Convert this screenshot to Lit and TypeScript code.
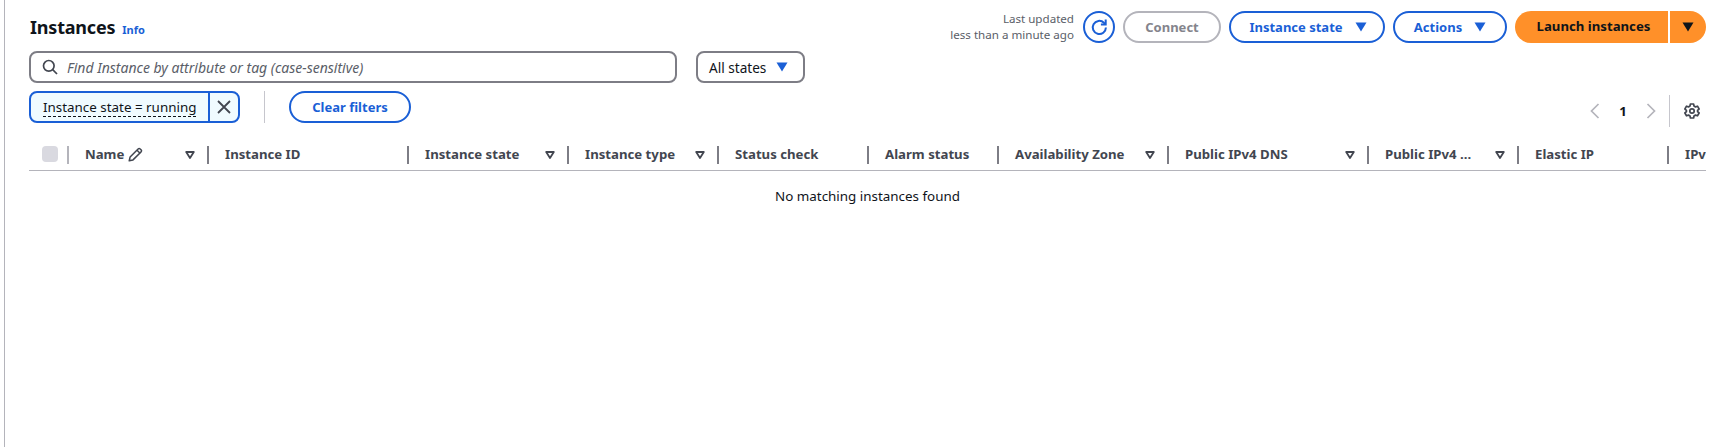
import { LitElement, html, css, svg } from "lit";
import { customElement } from "lit/decorators.js";

const COLS = [
  { label: "Name", w: 140, sort: true, edit: true },
  { label: "Instance ID", w: 200 },
  { label: "Instance state", w: 160, sort: true },
  { label: "Instance type", w: 150, sort: true },
  { label: "Status check", w: 150 },
  { label: "Alarm status", w: 130 },
  { label: "Availability Zone", w: 170, sort: true },
  { label: "Public IPv4 DNS", w: 200, sort: true },
  { label: "Public IPv4 ...", w: 150, sort: true },
  { label: "Elastic IP", w: 150 },
  { label: "IPv", w: 38, last: true },
];

const caret = svg`<svg class="caret" viewBox="0 0 12 10" width="12" height="10"><path d="M0.5 0.5h11L6 9.5z" fill="currentColor"/></svg>`;
const sortIcon = svg`<svg class="sort" viewBox="0 0 10 8" width="10" height="8"><path d="M1.2 1h7.6L5 7z" fill="none" stroke="currentColor" stroke-width="1.8" stroke-linejoin="round"/></svg>`;

@customElement("app-root")
export class AppRoot extends LitElement {
  static styles = css`
    :host {
      display: block;
      font-family: "Noto Sans", "Open Sans", sans-serif;
      color: #0f141a;
      background: #fff;
    }
    * { box-sizing: border-box; }
    .frame {
      margin-left: 4px;
      height: 447px;
      border-left: 1px solid #b4b4bb;
      padding: 11px 23px 0 24px;
      overflow: hidden;
    }
    .top { display: flex; align-items: center; justify-content: space-between; height: 32px; }
    .title { display: flex; align-items: baseline; gap: 7px; padding-left: 1px; }
    h1 { margin: 0; font-size: 18px; font-weight: 700; line-height: 26px; letter-spacing: -0.2px; }
    .info { font-size: 11px; font-weight: 700; color: #1a5fd6; }
    .actions { display: flex; align-items: center; gap: 8px; }
    .updated {
      text-align: right; font-size: 11.6px; line-height: 16px; color: #5a5e68;
      margin-right: 1px;
    }
    .btn {
      display: flex; align-items: center; justify-content: center; gap: 12px;
      height: 32px; border: 2px solid #1a5fd6; border-radius: 16px; background: #fff;
      color: #1a5fd6; font: 700 13px/1 "Noto Sans", sans-serif; padding: 0;
    }
    .refresh { width: 32px; }
    .connect { width: 98px; border-color: #b4b4bb; color: #84848c; }
    .state { width: 156px; padding-left: 2px; }
    .act { width: 114px; }
    .split { display: flex; gap: 2px; }
    .launch, .launch-more {
      height: 32px; background: #ff9029; border: 0; color: #0f141a;
      display: flex; align-items: center; justify-content: center;
      font: 700 13.2px/1 "Noto Sans", sans-serif; padding: 0;
    }
    .launch { width: 153px; border-radius: 16px 0 0 16px; padding-left: 4px; }
    .launch-more { width: 36px; border-radius: 0 16px 16px 0; }
    .row { display: flex; align-items: center; margin-top: 8px; height: 32px; }
    .search {
      width: 648px; height: 32px; border: 2px solid #7d7d85; border-radius: 8px;
      display: flex; align-items: center; gap: 9px; padding-left: 11px;
      font-size: 14px; font-style: italic; color: #5a5e68;
    }
    .filter {
      margin-left: 19px; width: 109px; height: 32px; border: 2px solid #7d7d85; border-radius: 8px;
      display: flex; align-items: center; gap: 10px; padding-left: 11px;
      font-size: 13.6px; color: #0f141a;
    }
    .filter .caret { color: #1a5fd6; }
    .token {
      display: flex; width: 211px; height: 32px; border: 2px solid #1a5fd6; border-radius: 8px;
      background: #f0fbff; overflow: hidden;
    }
    .token-label { width: 179px; padding: 5px 0 0 12px; border-right: 2px solid #1a5fd6; font-size: 13.4px; }
    .token-label span { display: inline-block; line-height: 17px; border-bottom: 1px dashed #0f141a; white-space: nowrap; }
    .token-x { flex: 1; display: flex; align-items: center; justify-content: center; }
    .vr { width: 1px; height: 32px; background: #c6c6cd; margin-left: 24px; }
    .clear { width: 122px; margin-left: 24px; }
    .pager { margin-left: auto; display: flex; align-items: center; height: 32px; margin-top: 8px; margin-right: 6px; font-size: 13.2px; font-weight: 700; }
    .pager .num { width: 14px; margin: 0 16px; text-align: center; }
    .pager .sep { width: 1px; height: 32px; background: #c6c6cd; margin: 0 14px 0 13px; }
    .thead {
      display: flex; margin-top: 17px; height: 31px; width: 100%; overflow: hidden;
      border-bottom: 1px solid #b4b4bb; color: #424650;
      font-size: 13.2px; font-weight: 700; white-space: nowrap;
    }
    .cb-cell { flex: none; width: 38px; padding: 6px 0 0 13px; }
    .cb { display: block; width: 16px; height: 16px; border-radius: 4px; background: #d9d9e0; }
    .cell { flex: none; position: relative; display: flex; align-items: flex-start; padding: 5px 0 0 16px; line-height: 18px; }
    .cell-label { display: inline-flex; align-items: center; gap: 4px; }
    .sort { position: absolute; right: 14px; top: 11px; color: #424650; }
    .empty { text-align: center; margin-top: 16px; font-size: 13.4px; line-height: 18px; }
    .sep-first { flex: none; width: 2px; height: 18px; margin-top: 6px; background: #b4b4bb; }
    .sep-col { flex: none; width: 2px; height: 18px; margin-top: 6px; background: #7d7d85; margin-left: -2px; position: relative; }
  `;

  render() {
    return html`
      <div class="frame">
        <div class="top">
          <div class="title"><h1>Instances</h1><span class="info">Info</span></div>
          <div class="actions">
            <div class="updated">Last updated<br />less than a minute ago</div>
            <button class="btn refresh">
              <svg width="19" height="19" viewBox="0 0 19 19" fill="none" stroke="#1a5fd6" stroke-width="2"><path d="M15.9 9.5a6.6 6.6 0 1 1-2-4.8l1.6 1.4"/><path d="M15.7 1.6v4.8h-4.8"/></svg>
            </button>
            <button class="btn connect">Connect</button>
            <button class="btn state">Instance state ${caret}</button>
            <button class="btn act">Actions ${caret}</button>
            <div class="split">
              <button class="launch">Launch instances</button>
              <button class="launch-more">${caret}</button>
            </div>
          </div>
        </div>

        <div class="row">
          <div class="search">
            <svg width="16" height="16" viewBox="0 0 16 16" fill="none" stroke="#424650" stroke-width="1.7"><circle cx="6.8" cy="6.8" r="5.3"/><path d="M10.7 10.7L15 15"/></svg>
            Find Instance by attribute or tag (case-sensitive)
          </div>
          <div class="filter">All states ${caret}</div>
        </div>

        <div class="row">
          <div class="token">
            <div class="token-label"><span>Instance state = running</span></div>
            <div class="token-x">
              <svg width="14" height="14" viewBox="0 0 14 14" stroke="#424650" stroke-width="1.8"><path d="M1 1l12 12M13 1L1 13"/></svg>
            </div>
          </div>
          <div class="vr"></div>
          <button class="btn clear">Clear filters</button>
          <div class="pager">
            <svg width="10" height="16" viewBox="0 0 10 16" fill="none" stroke="#b4b4bb" stroke-width="1.7"><path d="M8.5 1L1.5 8l7 7"/></svg>
            <span class="num">1</span>
            <svg width="10" height="16" viewBox="0 0 10 16" fill="none" stroke="#b4b4bb" stroke-width="1.7"><path d="M1.5 1l7 7-7 7"/></svg>
            <span class="sep"></span>
            <svg width="16" height="16" viewBox="0 0 16 16" fill="none" stroke="#424650" stroke-width="1.7" stroke-linejoin="round"><path d="M6.4 1h3.2l.4 2 1.5.9 2-.7 1.6 2.8-1.5 1.3v1.4l1.5 1.3-1.6 2.8-2-.7-1.5.9-.4 2H6.4l-.4-2-1.5-.9-2 .7-1.6-2.8 1.5-1.3V7.3L.9 6l1.6-2.8 2 .7L6 3z"/><circle cx="8" cy="8" r="2.2"/></svg>
          </div>
        </div>

        <div class="thead">
          <div class="cb-cell"><span class="cb"></span></div>
          <span class="sep-first"></span>
          ${COLS.map(
            (c) => html`
              <div class="cell" style="width:${c.w}px">
                <span class="cell-label">
                  ${c.label}
                  ${c.edit
                    ? html`<svg width="15" height="15" viewBox="0 0 15 15" fill="none" stroke="#424650" stroke-width="1.5" stroke-linejoin="round"><path d="M1.2 13.8l.9-3.8 8-8a1.5 1.5 0 0 1 2.1 0l.8.8a1.5 1.5 0 0 1 0 2.1l-8 8z"/><path d="M9 3.2l2.8 2.8"/></svg>`
                    : ""}
                </span>
                ${c.sort ? sortIcon : ""}
              </div>
              ${c.last ? "" : html`<span class="sep-col"></span>`}
            `
          )}
        </div>
        <div class="empty">No matching instances found</div>
      </div>
    `;
  }
}
